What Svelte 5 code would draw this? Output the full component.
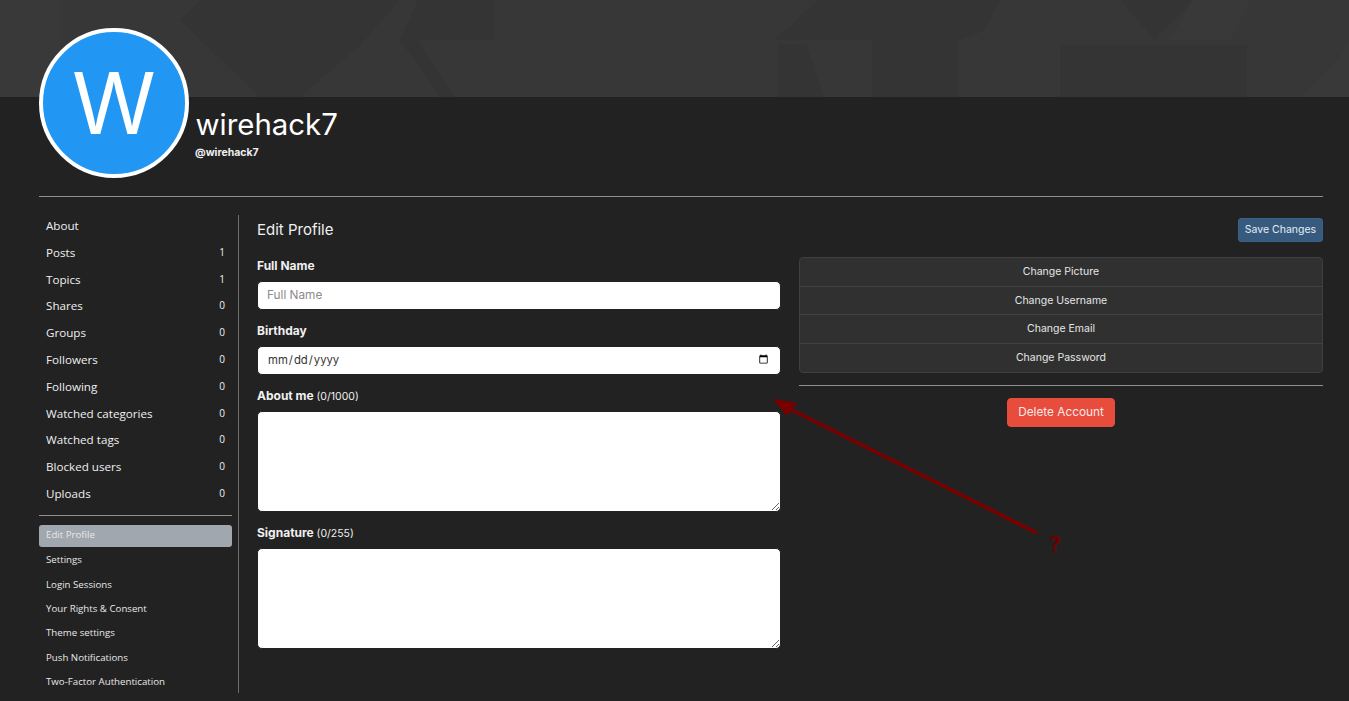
<script lang="ts">
	const stats = [
		{ label: 'About' },
		{ label: 'Posts', count: 1 },
		{ label: 'Topics', count: 1 },
		{ label: 'Shares', count: 0 },
		{ label: 'Groups', count: 0 },
		{ label: 'Followers', count: 0 },
		{ label: 'Following', count: 0 },
		{ label: 'Watched categories', count: 0 },
		{ label: 'Watched tags', count: 0 },
		{ label: 'Blocked users', count: 0 },
		{ label: 'Uploads', count: 0 }
	];
	const accountLinks = ['Edit Profile', 'Settings', 'Login Sessions', 'Your Rights & Consent', 'Theme settings', 'Push Notifications', 'Two-Factor Authentication'];
	const changeLinks = ['Change Picture', 'Change Username', 'Change Email', 'Change Password'];

	// cover pattern, tone blocks and diagonal shards
	const coverDark = [
		'418,0 494,0 494,40 400,40', '400,40 418,40 455,97 440,97', '200,0 400,0 360,45 300,97 260,97 180,20',
		'818,0 1000,0 985,30 960,40 775,40', '778,44 806,44 824,97 778,97', '872,40 957,40 957,97 872,97',
		'1120,0 1193,0 1155,40', '1060,45 1154,45 1154,97 1060,97', '1154,45 1247,45 1247,97 1154,97'
	];
	const coverLight = [
		'1338,60 1349,40 1349,97 1300,97', '1193,0 1250,0 1230,40 1170,40', '0,0 60,0 60,97 0,97'
	];
</script>

<div class="page">
	<div class="cover">
		<svg class="cover-art" width="1349" height="97" viewBox="0 0 1349 97" aria-hidden="true">
			{#each coverDark as pts}<polygon points={pts} fill="#343434" />{/each}
			{#each coverLight as pts}<polygon points={pts} fill="#393939" />{/each}
		</svg>
	</div>

	<div class="container">
		<header class="head">
			<div class="avatar">W</div>
			<div class="who">
				<h1>wirehack7</h1>
				<div class="handle">@wirehack7</div>
			</div>
		</header>

		<hr class="rule-top" />

		<div class="layout">
			<aside class="side">
				<nav class="stats">
					{#each stats as s}
						<div class="stat">
							<span>{s.label}</span>
							{#if s.count !== undefined}<span class="count">{s.count}</span>{/if}
						</div>
					{/each}
				</nav>
				<hr class="rule-side" />
				<nav class="links">
					{#each accountLinks as link, i}
						<div class="link" class:active={i === 0}>{link}</div>
					{/each}
				</nav>
			</aside>

			<main class="main">
				<div class="title-row">
					<h2>Edit Profile</h2>
					<button class="save">Save Changes</button>
				</div>
				<div class="cols">
					<form class="form">
						<div class="group">
							<label for="fullname">Full Name</label>
							<input id="fullname" type="text" placeholder="Full Name" />
						</div>
						<div class="group">
							<label for="birthday">Birthday</label>
							<input id="birthday" type="date" />
						</div>
						<div class="group">
							<label for="about">About me <small>(0/1000)</small></label>
							<textarea id="about"></textarea>
						</div>
						<div class="group">
							<label for="signature">Signature <small>(0/255)</small></label>
							<textarea id="signature"></textarea>
						</div>
					</form>
					<div class="actions">
						<div class="list">
							{#each changeLinks as item}
								<div class="item">{item}</div>
							{/each}
						</div>
						<hr class="rule-actions" />
						<button class="delete">Delete Account</button>
					</div>
				</div>
			</main>
		</div>
	</div>

	<!-- annotation drawn over the screenshot -->
	<svg class="note" width="1349" height="701" viewBox="0 0 1349 701" aria-hidden="true">
		<line x1="1037" y1="533" x2="788" y2="408" stroke="#7a0000" stroke-width="3.5" />
		<polygon points="773,399 797,403 787,416" fill="#7a0000" />
		<text x="1049" y="552" class="note-text">?</text>
	</svg>
</div>

<style>
	:global(body) {
		background: #222222;
		font-family: Inter, "Liberation Sans", sans-serif;
		color: #f8f9fa;
	}
	.page { position: relative; height: 701px; overflow: hidden; }
	.cover { height: 97px; background: #373737; position: relative; overflow: hidden; }
	.cover-art { position: absolute; left: 0; top: 0; }
	.container { padding: 0 26px 0 39px; }

	.head { display: flex; margin-top: -69px; position: relative; height: 168px; }
	.avatar {
		width: 150px; height: 150px; box-sizing: border-box;
		border: 4px solid #fff; border-radius: 50%;
		background: #2196f3; color: #fff;
		display: flex; align-items: center; justify-content: center;
		font-size: 85px; line-height: 1; flex: none;
	}
	.who { margin: 79px 0 0 6.5px; }
	h1 { margin: 0; font-size: 29.4px; font-weight: 400; line-height: 36px; color: #fff; }
	.handle { font-size: 10.5px; font-weight: 700; line-height: 14px; margin: 3px 0 0 -0.5px; color: #f0f0f0; }

	hr { border: 0; border-top: 1px solid #8f8f8f; margin: 0; }
	.rule-top { margin-bottom: 18px; }

	.layout { display: flex; }
	.side { width: 193px; padding-right: 6px; border-right: 1px solid #6e6e6e; flex: none; }
	.stat {
		height: 26.8px; display: flex; justify-content: space-between; padding: 0 7px;
		font-family: "Open Sans", sans-serif; font-size: 11.65px; font-weight: 500; line-height: 22px; color: #f0f0f0;
	}
	.count { font-size: 10px; line-height: 20px; }
	.rule-side { margin: 5px 0 9px; }
	.links { display: flex; flex-direction: column; gap: 2.4px; }
	.link {
		height: 22px; line-height: 21px; padding: 0 7px; border-radius: 3px;
		font-family: "Open Sans", sans-serif; font-size: 9.7px; color: #e8e8e8;
	}
	.link.active { background: #a0a7ae; line-height: 20px; }

	.main { flex: 1; padding-left: 18px; min-width: 0; }
	.title-row { display: flex; justify-content: space-between; align-items: center; margin: 3px 0 15px; height: 24px; }
	h2 { margin: -2px 0 0; font-size: 15px; font-weight: 400; color: #f0f0f0; }
	button { font-family: inherit; border-radius: 3px; cursor: pointer; }
	.save { height: 24px; width: 85px; padding: 0 0 2px; background: #375a7f; border: 1px solid #3b6189; color: #e4ebf2; font-size: 10.5px; }

	.cols { display: flex; gap: 18px; }
	.form { width: 524px; flex: none; }
	.group { margin-bottom: 13px; }
	label { display: block; height: 18px; line-height: 18px; margin-bottom: 7px; font-size: 12px; font-weight: 700; color: #f0f0f0; }
	small { font-size: 10.5px; font-weight: 400; }
	input, textarea {
		display: block; box-sizing: border-box; width: 100%; margin: 0;
		background: #fff; border: 1px solid #222; border-radius: 5px;
		padding: 0 9px; font-family: inherit; font-size: 11.8px; color: #333;
	}
	input { height: 29px; margin-top: -1px; margin-bottom: -1px; padding-bottom: 1px; }
	input[type="date"] { font-size: 11.3px; }
	input::placeholder { color: #8c8c8c; }
	textarea { height: 101px; margin-top: -1px; margin-bottom: -1px; }

	.actions { flex: 1; min-width: 0; text-align: center; }
	.list { border: 1px solid #3f3f3f; border-radius: 4px; background: #303030; overflow: hidden; }
	.item { height: 28.5px; line-height: 27px; border-bottom: 1px solid #414141; box-sizing: border-box; font-size: 10.5px; color: #e6e6e6; }
	.item:last-child { border-bottom: 0; }
	.rule-actions { margin: 12px 0 12px; }
	.delete { width: 108px; height: 29px; padding: 0 0 2px; background: #e74c3c; border: 1px solid #e74c3c; border-radius: 4px; color: #f8e9e7; font-size: 11.8px; }

	.note { position: absolute; left: 0; top: 0; pointer-events: none; }
	.note-text { font-family: Inter, sans-serif; font-size: 21px; font-weight: 700; fill: #6e0000; }
</style>
